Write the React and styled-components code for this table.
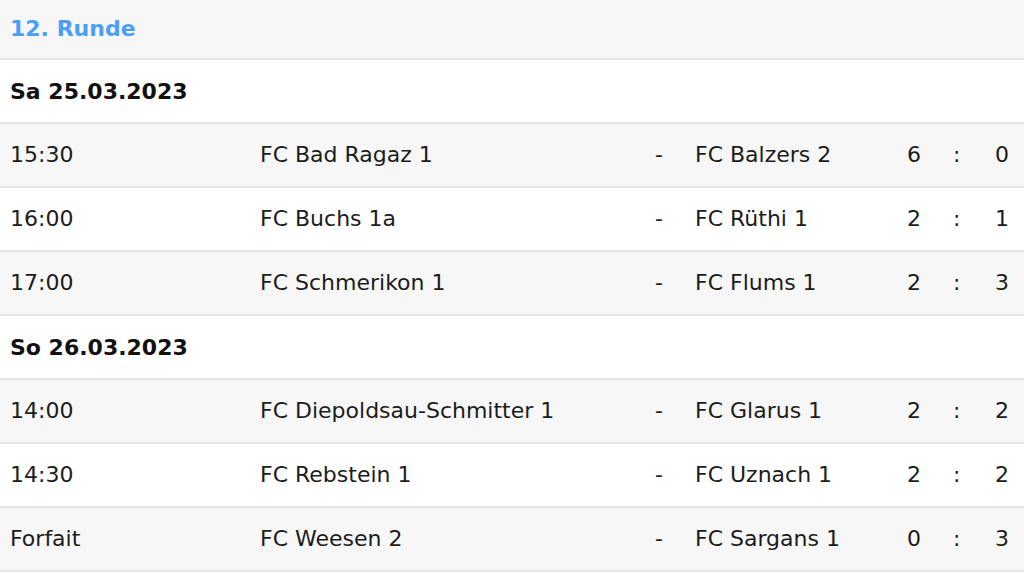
import styled, { createGlobalStyle } from "styled-components";

const GlobalStyle = createGlobalStyle`
  body {
    margin: 0;
    background: #ffffff;
    font-family: "DejaVu Sans", Verdana, sans-serif;
    color: #1c1c1c;
  }
`;

const Round = styled.section`
  width: 1024px;
  font-size: 22px;
`;

const RoundTitle = styled.h2`
  margin: 0;
  height: 56px;
  display: flex;
  align-items: center;
  padding: 0 10px 2px;
  background: #f7f7f7;
  color: #4aa0f4;
  font-size: 22px;
  font-weight: bold;
  border-bottom: 2px solid #e4e4e4;
`;

const DayTitle = styled.div`
  height: 62px;
  display: flex;
  align-items: center;
  padding: 0 10px;
  background: #ffffff;
  font-weight: bold;
  color: #111;
  border-bottom: 2px solid #e4e4e4;
`;

const MatchRow = styled.div`
  display: grid;
  grid-template-columns: 250px 395px 40px 212px 46px 42px 1fr;
  align-items: center;
  height: 62px;
  padding-left: 10px;
  background: ${({ $striped }) => ($striped ? "#f7f7f7" : "#ffffff")};
  border-bottom: 2px solid #e4e4e4;
  white-space: nowrap;
`;

const Cell = styled.span`
  line-height: 1;
`;

const days = [
  {
    date: "Sa 25.03.2023",
    matches: [
      ["15:30", "FC Bad Ragaz 1", "FC Balzers 2", 6, 0],
      ["16:00", "FC Buchs 1a", "FC Rüthi 1", 2, 1],
      ["17:00", "FC Schmerikon 1", "FC Flums 1", 2, 3],
    ],
  },
  {
    date: "So 26.03.2023",
    matches: [
      ["14:00", "FC Diepoldsau-Schmitter 1", "FC Glarus 1", 2, 2],
      ["14:30", "FC Rebstein 1", "FC Uznach 1", 2, 2],
      ["Forfait", "FC Weesen 2", "FC Sargans 1", 0, 3],
    ],
  },
];

export default function App() {
  return (
    <>
      <GlobalStyle />
      <Round>
        <RoundTitle>12. Runde</RoundTitle>
        {days.map((day) => (
          <div key={day.date}>
            <DayTitle>{day.date}</DayTitle>
            {day.matches.map(([time, home, away, h, a], i) => (
              <MatchRow key={home} $striped={i % 2 === 0}>
                <Cell>{time}</Cell>
                <Cell>{home}</Cell>
                <Cell>-</Cell>
                <Cell>{away}</Cell>
                <Cell>{h}</Cell>
                <Cell>:</Cell>
                <Cell>{a}</Cell>
              </MatchRow>
            ))}
          </div>
        ))}
      </Round>
    </>
  );
}
